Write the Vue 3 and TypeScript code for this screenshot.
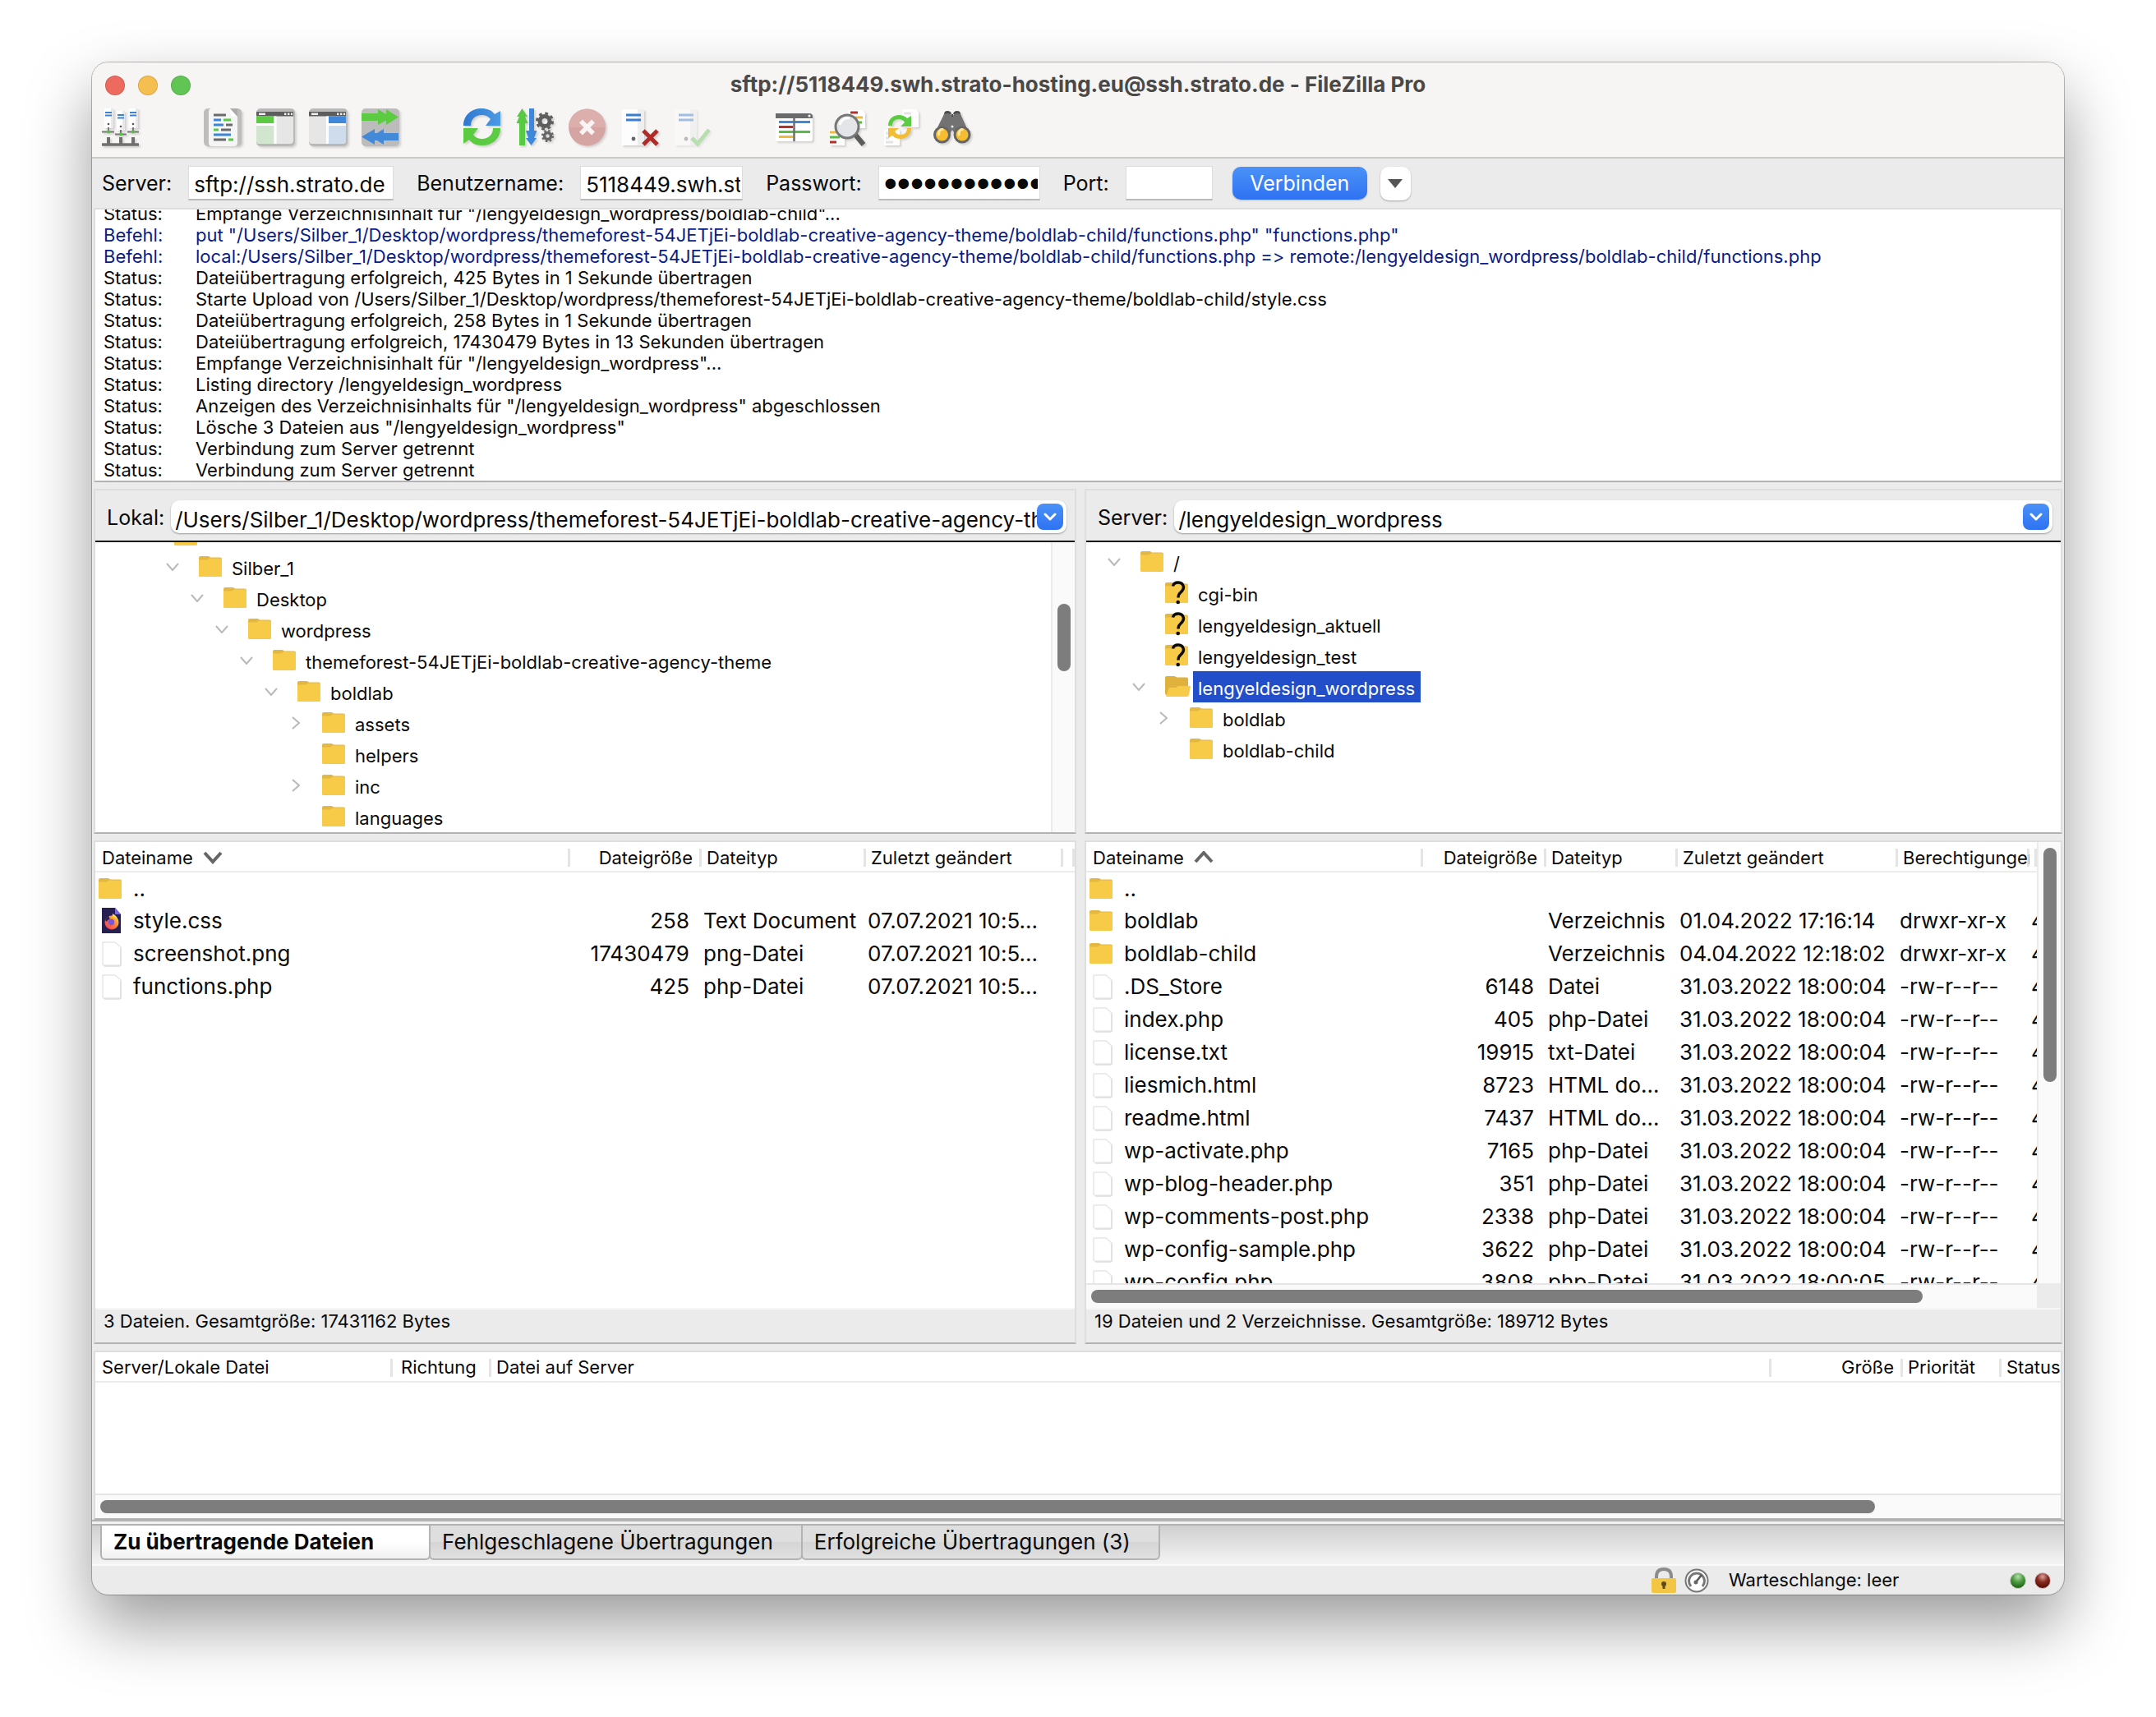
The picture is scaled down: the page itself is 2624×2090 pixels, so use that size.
<script setup lang="ts">
import { ref } from 'vue'

interface LogLine { kind: 'Status' | 'Befehl'; text: string }
interface TreeNode { depth: number; name: string; icon: string; open?: boolean; closed?: boolean; selected?: boolean }
interface FileRow { icon: string; name: string; size: string; type: string; date: string; perms?: string; owner?: string }

const server = ref('sftp://ssh.strato.de')
const user = ref('5118449.swh.strato-hosting.eu')
const password = ref('passwort12345678')
const port = ref('')
const localPath = ref('/Users/Silber_1/Desktop/wordpress/themeforest-54JETjEi-boldlab-creative-agency-theme/')
const remotePath = ref('/lengyeldesign_wordpress')

const toolGroups: { id: string; label: string; faded?: boolean }[][] = [
  [{ id: 'sites', label: 'Servermanager' }],
  [
    { id: 'log', label: 'Nachrichtenprotokoll' },
    { id: 'localtree', label: 'Lokaler Verzeichnisbaum' },
    { id: 'remotetree', label: 'Server-Verzeichnisbaum' },
    { id: 'queue', label: 'Warteschlange' },
  ],
  [
    { id: 'refresh', label: 'Aktualisieren' },
    { id: 'process', label: 'Warteschlange verarbeiten' },
    { id: 'cancel', label: 'Abbrechen' },
    { id: 'disconnect', label: 'Trennen' },
    { id: 'reconnect', label: 'Wiederverbinden', faded: true },
  ],
  [
    { id: 'filter', label: 'Filter' },
    { id: 'compare', label: 'Verzeichnisvergleich' },
    { id: 'sync', label: 'Synchronisierter Verzeichniswechsel' },
    { id: 'find', label: 'Dateien suchen' },
  ],
]

const theme = '/Users/Silber_1/Desktop/wordpress/themeforest-54JETjEi-boldlab-creative-agency-theme/boldlab-child'
const log: LogLine[] = [
  { kind: 'Status', text: 'Empfange Verzeichnisinhalt für "/lengyeldesign_wordpress/boldlab-child"...' },
  { kind: 'Befehl', text: `put "${theme}/functions.php" "functions.php"` },
  { kind: 'Befehl', text: `local:${theme}/functions.php => remote:/lengyeldesign_wordpress/boldlab-child/functions.php` },
  { kind: 'Status', text: 'Dateiübertragung erfolgreich, 425 Bytes in 1 Sekunde übertragen' },
  { kind: 'Status', text: `Starte Upload von ${theme}/style.css` },
  { kind: 'Status', text: 'Dateiübertragung erfolgreich, 258 Bytes in 1 Sekunde übertragen' },
  { kind: 'Status', text: 'Dateiübertragung erfolgreich, 17430479 Bytes in 13 Sekunden übertragen' },
  { kind: 'Status', text: 'Empfange Verzeichnisinhalt für "/lengyeldesign_wordpress"...' },
  { kind: 'Status', text: 'Listing directory /lengyeldesign_wordpress' },
  { kind: 'Status', text: 'Anzeigen des Verzeichnisinhalts für "/lengyeldesign_wordpress" abgeschlossen' },
  { kind: 'Status', text: 'Lösche 3 Dateien aus "/lengyeldesign_wordpress"' },
  { kind: 'Status', text: 'Verbindung zum Server getrennt' },
  { kind: 'Status', text: 'Verbindung zum Server getrennt' },
]

const localTree: TreeNode[] = [
  { depth: 2, name: '', icon: 'folder', open: true },
  { depth: 3, name: 'Silber_1', icon: 'folder', open: true },
  { depth: 4, name: 'Desktop', icon: 'folder', open: true },
  { depth: 5, name: 'wordpress', icon: 'folder', open: true },
  { depth: 6, name: 'themeforest-54JETjEi-boldlab-creative-agency-theme', icon: 'folder', open: true },
  { depth: 7, name: 'boldlab', icon: 'folder', open: true },
  { depth: 8, name: 'assets', icon: 'folder', closed: true },
  { depth: 8, name: 'helpers', icon: 'folder' },
  { depth: 8, name: 'inc', icon: 'folder', closed: true },
  { depth: 8, name: 'languages', icon: 'folder' },
]
const remoteTree: TreeNode[] = [
  { depth: 1, name: '/', icon: 'folder', open: true },
  { depth: 2, name: 'cgi-bin', icon: 'unknown' },
  { depth: 2, name: 'lengyeldesign_aktuell', icon: 'unknown' },
  { depth: 2, name: 'lengyeldesign_test', icon: 'unknown' },
  { depth: 2, name: 'lengyeldesign_wordpress', icon: 'folderopen', open: true, selected: true },
  { depth: 3, name: 'boldlab', icon: 'folder', closed: true },
  { depth: 3, name: 'boldlab-child', icon: 'folder' },
]

const localFiles: FileRow[] = [
  { icon: 'folder', name: '..', size: '', type: '', date: '' },
  { icon: 'firefox', name: 'style.css', size: '258', type: 'Text Document', date: '07.07.2021 10:5...' },
  { icon: 'file', name: 'screenshot.png', size: '17430479', type: 'png-Datei', date: '07.07.2021 10:5...' },
  { icon: 'file', name: 'functions.php', size: '425', type: 'php-Datei', date: '07.07.2021 10:5...' },
]

const remoteFile = (name: string, size: string, type = 'php-Datei', date = '31.03.2022 18:00:04'): FileRow =>
  ({ icon: 'file', name, size, type, date, perms: '-rw-r--r--', owner: '4' })
const remoteFiles: FileRow[] = [
  { icon: 'folder', name: '..', size: '', type: '', date: '' },
  { icon: 'folder', name: 'boldlab', size: '', type: 'Verzeichnis', date: '01.04.2022 17:16:14', perms: 'drwxr-xr-x', owner: '4' },
  { icon: 'folder', name: 'boldlab-child', size: '', type: 'Verzeichnis', date: '04.04.2022 12:18:02', perms: 'drwxr-xr-x', owner: '4' },
  remoteFile('.DS_Store', '6148', 'Datei'),
  remoteFile('index.php', '405'),
  remoteFile('license.txt', '19915', 'txt-Datei'),
  remoteFile('liesmich.html', '8723', 'HTML do...'),
  remoteFile('readme.html', '7437', 'HTML do...'),
  remoteFile('wp-activate.php', '7165'),
  remoteFile('wp-blog-header.php', '351'),
  remoteFile('wp-comments-post.php', '2338'),
  remoteFile('wp-config-sample.php', '3622'),
  remoteFile('wp-config.php', '3808', 'php-Datei', '31.03.2022 18:00:05'),
]

const tabs = ['Zu übertragende Dateien', 'Fehlgeschlagene Übertragungen', 'Erfolgreiche Übertragungen (3)']
const activeTab = ref(0)
</script>

<template>
  <div class="desktop">
    <svg class="sprites" width="0" height="0" aria-hidden="true">
      <defs>
        <linearGradient id="gFox" x1="1" y1="0" x2="0" y2="1">
          <stop offset="0" stop-color="#ffd83b" /><stop offset=".5" stop-color="#ff7a35" /><stop offset="1" stop-color="#e8316f" />
        </linearGradient>
        <linearGradient id="gBlue" x1="0" y1="0" x2="1" y2="0">
          <stop offset="0" stop-color="#2f78cf" /><stop offset="1" stop-color="#4a9ae6" />
        </linearGradient>
        <radialGradient id="gGreenLed" cx=".5" cy=".25" r=".8">
          <stop offset="0" stop-color="#b5dfb0" /><stop offset=".45" stop-color="#4c9a3f" /><stop offset="1" stop-color="#165409" />
        </radialGradient>
        <radialGradient id="gRedLed" cx=".5" cy=".25" r=".8">
          <stop offset="0" stop-color="#d9a29c" /><stop offset=".45" stop-color="#87281f" /><stop offset="1" stop-color="#4c0600" />
        </radialGradient>
      </defs>

      <symbol id="folder" viewBox="0 0 32 32">
        <path d="M0 5q0-2 2-2h9q2 0 3 1.500h12q2 0 2 2V26q0 2-2 2H2q-2 0-2-2z" fill="#e2b742" />
        <path d="M0 7.500h10l3-2h13q2 0 2 2V26q0 2-2 2H2q-2 0-2-2z" fill="#f7cb47" />
      </symbol>
      <symbol id="folderopen" viewBox="0 0 32 32">
        <path d="M0 5q0-2 2-2h9q2 0 3 1.500h12q2 0 2 2V26H2q-2 0-2-2z" fill="#dfb13d" />
        <path d="M1 28L4 19q.5-2 2.500-2H13l3-2h15l-2 11q-.5 2-2.500 2z" fill="#f7cb47" />
      </symbol>
      <symbol id="unknown" viewBox="0 0 32 32">
        <path d="M0 5q0-2 2-2h9q2 0 3 1.500h12q2 0 2 2V26q0 2-2 2H2q-2 0-2-2z" fill="#e2b742" />
        <path d="M0 7.500h10l3-2h13q2 0 2 2V26q0 2-2 2H2q-2 0-2-2z" fill="#f7cb47" />
        <path d="M9.500 7.500Q10.500 3 16 3t6.500 5.500q0 3.500-3.500 6.500-3 2.500-3 6.500" fill="none" stroke="#0c0a04" stroke-width="3.400" />
        <circle cx="15.700" cy="27" r="2.300" fill="#0c0a04" />
      </symbol>
      <symbol id="file" viewBox="0 0 32 32">
        <path d="M5 2h15l7 6v20q0 2-2 2H7q-2 0-2-2z" fill="#fff" stroke="#e6e6e6" stroke-width="1.500" />
        <path d="M27 9v20q0 2-2 2H7" fill="none" stroke="#dedede" stroke-width="1.500" />
      </symbol>
      <symbol id="firefox" viewBox="0 0 32 32">
        <path d="M4 0h16l7 8v23H4z" fill="#261f52" />
        <path d="M20 0l7 8h-7z" fill="#7a68e0" />
        <circle cx="16" cy="18" r="8.500" fill="url(#gFox)" />
        <circle cx="15.500" cy="17.500" r="3.700" fill="#7d55d8" />
        <path d="M17 7q6 3 7 9-2-4-6-4-2-2-1-5z" fill="#ffd83b" />
        <path d="M8 15q2-4 5-5-1 2 1 4-3 0-4 3z" fill="#261f52" />
      </symbol>

      <symbol id="sites" viewBox="0 0 48 48">
        <g fill="#fff"><path d="M3 0h11v24H3zM18 3h10v24H18zM33 0h11v24H33z" /></g>
        <g fill="#e8e8ea"><path d="M11 0h3v24h-3zM25 3h3v24h-3zM41 0h3v24h-3z" /></g>
        <g stroke="#3c82d2" stroke-width="2"><path d="M4 5h8M4 8.500h8M19 8h8M19 11.500h8M34 5h8M34 8.500h8" /></g>
        <g fill="#555"><circle cx="8" cy="19" r="1.300" /><circle cx="23" cy="22" r="1.300" /><circle cx="38" cy="19" r="1.300" /></g>
        <path d="M0 28.500h15M16 31.500h14M31 28.500h14M8 23v6M23 26v5M38 23v6" stroke="#777" stroke-width="2" />
        <path d="M8 35v8M23 35v8M38 35v8" stroke="#707070" stroke-width="4" />
        <path d="M0 44h45" stroke="#707070" stroke-width="3.500" />
        <g fill="#4fc33d"><circle cx="8" cy="28.500" r="2" /><circle cx="23" cy="31.500" r="2" /><circle cx="38" cy="28.500" r="2" /></g>
      </symbol>
      <symbol id="log" viewBox="0 0 48 48">
        <rect width="46" height="46" rx="5" fill="#bdbdbd" />
        <path d="M6 4q0-4 4-4h22l9 10v32q0 4-4 4H10q-4 0-4-4z" fill="#f5f5f5" />
        <path d="M32 0l9 10h-5q-4-1-4-6z" fill="#fff" />
        <path d="M32 0h9v10z" fill="#acacac" />
        <g fill="none" stroke-width="2.800">
          <path d="M12 8h15M27 20h8M21 26h12M12 38h15" stroke="#6b6b6b" />
          <path d="M12 14h9M12 20h12M12 32h21" stroke="#3c86d6" />
          <path d="M24 14h9M12 26h6M30 38h6" stroke="#58c945" />
        </g>
      </symbol>
      <symbol id="localtree" viewBox="0 0 48 48">
        <rect width="47" height="46" rx="5" fill="#b9b9b9" />
        <path d="M0 9h45v30q0 4-4 4H4q-4 0-4-4z" fill="#e6e6e6" />
        <path d="M0 4h45v5.500H0z" fill="#5d5d5d" />
        <path d="M3 6.800h8M34 6.800h2.400M38 6.800h2.400M42 6.800h2" stroke="#eee" stroke-width="2.400" />
        <path d="M0 9.500h21.500V18H0z" fill="#5ccb43" />
        <path d="M0 18h21.500v25H4q-4 0-4-4z" fill="#d2e6cf" />
        <path d="M23 9.500V43M0 19.500h23" stroke="#fff" stroke-width="3" />
      </symbol>
      <symbol id="remotetree" viewBox="0 0 48 48">
        <rect width="47" height="46" rx="5" fill="#b9b9b9" />
        <path d="M0 9h45v30q0 4-4 4H4q-4 0-4-4z" fill="#e6e6e6" />
        <path d="M0 4h45v5.500H0z" fill="#5d5d5d" />
        <path d="M3 6.800h8M34 6.800h2.400M38 6.800h2.400M42 6.800h2" stroke="#eee" stroke-width="2.400" />
        <path d="M24 9.500h21V18H24z" fill="#3f88dc" />
        <path d="M24 18h21v21q0 4-4 4H24z" fill="#cfdcec" />
        <path d="M22.500 9.500V43M22 19.500h23" stroke="#fff" stroke-width="3" />
      </symbol>
      <symbol id="queue" viewBox="0 0 48 48">
        <rect width="46" height="46" rx="5" fill="#bcbcbc" />
        <path d="M0 6h20V1l9 5.500h1V1l15 9.500L30 20v-5h-1l-9 5v-5H0z" fill="#5dcb41" />
        <path d="M45 30H27v-5l-8 5h-3v-5L0 34.500 16 44v-5h3l8 5v-5h18z" fill="#4289d8" />
      </symbol>
      <symbol id="refresh" viewBox="0 0 48 48">
        <path d="M0 21C0 8 10 0 22 0c7 0 12 2 16 7l7-4v18H27l6-8c-3-4-7-5-11-5C15 8 9 13 9 21z" fill="url(#gBlue)" />
        <path d="M45 24c0 13-10 21-22 21-7 0-12-2-16-7l-7 5V24h18l-6 8c3 4 7 5 11 5 7 0 13-5 13-13z" fill="#5bcb42" />
      </symbol>
      <symbol id="process" viewBox="0 0 48 48">
        <path d="M7.500 0L14 10h-3l3.500 8H11v27H4V18H.5L4 10H1z" fill="#58c943" />
        <path d="M16 0h6v27h3.500L22 36h3l-6.500 9L12 36h3l-3-9h4z" fill="#3f87d9" />
        <circle cx="35" cy="15.500" r="6" fill="none" stroke="#5e5e5e" stroke-width="5" />
        <circle cx="35" cy="15.500" r="9.500" fill="none" stroke="#5e5e5e" stroke-width="3" stroke-dasharray="3.700 3.760" />
        <circle cx="38.500" cy="33.500" r="4" fill="none" stroke="#666" stroke-width="3.500" />
        <circle cx="38.500" cy="33.500" r="6.500" fill="none" stroke="#666" stroke-width="2.200" stroke-dasharray="2.500 2.600" />
      </symbol>
      <symbol id="cancel" viewBox="0 0 48 48">
        <circle cx="22.500" cy="23" r="22.500" fill="#d5a5a3" />
        <path d="M0 23a22.500 22.500 0 0 1 45 0z" fill="#dcaeac" />
        <path d="M15 15.500l15 15M30 15.500l-15 15" stroke="#f8f4f3" stroke-width="5.500" />
      </symbol>
      <symbol id="disconnect" viewBox="0 0 48 48">
        <path d="M1 1h27v44H1z" fill="#fdfdfd" /><path d="M20 1h8v44h-8z" fill="#eeeeef" />
        <path d="M6 8h18M6 14h18" stroke="#3b7dcf" stroke-width="2.800" />
        <circle cx="15" cy="37" r="2.400" fill="#666" />
        <path d="M27 27l17 17M44 27L27 44" stroke="#b12a26" stroke-width="5" />
      </symbol>
      <symbol id="reconnect" viewBox="0 0 48 48">
        <path d="M1 1h27v44H1z" fill="#fdfdfd" /><path d="M20 1h8v44h-8z" fill="#ececee" />
        <path d="M6 8h18M6 14h18" stroke="#3b7dcf" stroke-width="2.800" />
        <circle cx="15" cy="37" r="2.400" fill="#777" />
        <path d="M22 36l7 7 14-17" fill="none" stroke="#6cc45c" stroke-width="5" />
      </symbol>
      <symbol id="filter" viewBox="0 0 48 48">
        <path d="M0 12h45v25q0 3-3 3H0z" fill="#fff" />
        <path d="M0 6h41q4 0 4 4v2H0z" fill="#6a6a6a" /><circle cx="41" cy="9" r="1.500" fill="#fff" />
        <g stroke-width="3"><path d="M4 16.500h38" stroke="#4088d6" /><path d="M4 22.500h17" stroke="#b5302c" /><path d="M4 28.500h38" stroke="#55bd43" /><path d="M4 34.500h17" stroke="#edbb3a" /></g>
        <path d="M22.500 12v28" stroke="#6f6f6f" stroke-width="2.500" />
      </symbol>
      <symbol id="compare" viewBox="0 0 48 48">
        <path d="M24 2h18l3 4v18H28zM2 26h18v19H2z" fill="#fff" />
        <path d="M27 5h9M2 41h8" stroke="#b5302c" stroke-width="3" /><path d="M33 11h9M2 29h8" stroke="#f0bc38" stroke-width="3" /><path d="M36 17h5M2 35h12" stroke="#55bd43" stroke-width="3" />
        <path d="M33 32l10 12" stroke="#5b5b5b" stroke-width="6" />
        <circle cx="23" cy="22" r="14" fill="#e3e5e9" stroke="#777" stroke-width="3" />
        <path d="M14 20a10 10 0 0 1 12-8" fill="none" stroke="#fff" stroke-width="3" />
      </symbol>
      <symbol id="sync" viewBox="0 0 48 48">
        <path d="M26 1h17l3 4v18H28zM4 26h19v19H4z" fill="#fff" />
        <path d="M28 6h9M6 30h8M6 36h4M6 41h9" stroke="#e4e4e4" stroke-width="3" />
        <path d="M9 21C9 13 15 8 22 8c4 0 7 1 10 4l5-3v13H24l5-5c-2-3-4-4-7-4-5 0-8 3-8 8z" fill="#5bcb42" />
        <path d="M37 24c0 8-6 13-13 13-4 0-7-1-10-4l-5 3V24h13l-5 4c2 3 4 4 7 4 5 0 8-3 8-8z" fill="#f1bc36" />
      </symbol>
      <symbol id="find" viewBox="0 0 48 48">
        <path d="M13 7q0-4 4-4 5 0 5 5v3h2V8q0-5 5-5 4 0 4 4z" fill="#4b4b4b" />
        <path d="M12 9q0-3 5-3 5 0 5 4h2q0-4 5-4t5 3l9 20-14 6-6-9-6 9L0 33z" fill="#727272" />
        <circle cx="10.500" cy="32" r="10.500" fill="#666" /><circle cx="35" cy="32" r="10.500" fill="#666" />
        <circle cx="10.500" cy="32" r="7.500" fill="#f6bd30" /><circle cx="35" cy="32" r="7.500" fill="#f6bd30" />
        <path d="M7 33a4 5 0 0 1 5-7M31.500 33a4 5 0 0 1 5-7" fill="none" stroke="#ffe7a0" stroke-width="3" />
        <circle cx="23" cy="22" r="1.500" fill="#eee" />
      </symbol>
    </svg>

    <main class="window">
      <header class="titlebar">
        <div class="title-row">
          <div class="lights">
            <button class="light red" aria-label="Schließen"></button>
            <button class="light yellow" aria-label="Minimieren"></button>
            <button class="light green" aria-label="Vergrößern"></button>
          </div>
          <h1>sftp://5118449.swh.strato-hosting.eu@ssh.strato.de - FileZilla Pro</h1>
        </div>
        <nav class="toolbar">
          <div v-for="(group, g) in toolGroups" :key="g" class="tool-group">
            <button v-for="tool in group" :key="tool.id" class="tool" :class="{ faded: tool.faded }" :aria-label="tool.label">
              <svg><use :href="'#' + tool.id" /></svg>
            </button>
          </div>
        </nav>
      </header>

      <form class="quick" @submit.prevent>
        <label for="q-server">Server:</label>
        <input id="q-server" v-model="server" class="field w-server" type="text" />
        <label for="q-user">Benutzername:</label>
        <input id="q-user" v-model="user" class="field w-user" type="text" />
        <label for="q-pass">Passwort:</label>
        <input id="q-pass" v-model="password" class="field w-pass" type="password" autocomplete="off" />
        <label for="q-port">Port:</label>
        <input id="q-port" v-model="port" class="field w-port" type="text" />
        <button class="connect" type="submit">Verbinden</button>
        <button class="history" type="button" aria-label="Verlauf">
          <svg width="18" height="11" viewBox="0 0 18 11"><path d="M0 0h18L9 11z" fill="#555" /></svg>
        </button>
      </form>

      <section class="pane log">
        <p v-for="(line, i) in log" :key="i" :class="{ command: line.kind === 'Befehl' }">
          <span>{{ line.kind }}:</span><span>{{ line.text }}</span>
        </p>
      </section>

      <div class="split">
        <section class="pane">
          <div class="pathbar">
            <label for="p-local">Lokal:</label>
            <div class="combo">
              <input id="p-local" v-model="localPath" type="text" />
              <button aria-label="Lokale Pfade"><svg width="16" height="10" viewBox="0 0 16 10"><path d="M2 2l6 6 6-6" fill="none" stroke="#fff" stroke-width="3" stroke-linecap="round" stroke-linejoin="round" /></svg></button>
            </div>
          </div>
          <div class="tree-area">
            <ul class="tree local-tree">
              <li v-for="(node, i) in localTree" :key="i" :style="{ paddingLeft: node.depth * 30 - 8 + 'px' }">
                <span class="twist">
                  <svg v-if="node.open" width="16" height="10" viewBox="0 0 16 10"><path d="M1 1l7 8 7-8" /></svg>
                  <svg v-else-if="node.closed" width="10" height="16" viewBox="0 0 10 16"><path d="M1 1l8 7-8 7" /></svg>
                </span>
                <svg class="node-icon"><use :href="'#' + node.icon" /></svg>
                <span class="node-name">{{ node.name }}</span>
              </li>
            </ul>
            <div class="vtrack"><div class="thumb local-thumb"></div></div>
          </div>
        </section>
        <section class="pane">
          <div class="pathbar">
            <label for="p-remote">Server:</label>
            <div class="combo">
              <input id="p-remote" v-model="remotePath" type="text" />
              <button aria-label="Serverpfade"><svg width="16" height="10" viewBox="0 0 16 10"><path d="M2 2l6 6 6-6" fill="none" stroke="#fff" stroke-width="3" stroke-linecap="round" stroke-linejoin="round" /></svg></button>
            </div>
          </div>
          <div class="tree-area">
            <ul class="tree remote-tree">
              <li v-for="(node, i) in remoteTree" :key="i" :style="{ paddingLeft: node.depth * 30 - 8 + 'px' }">
                <span class="twist">
                  <svg v-if="node.open" width="16" height="10" viewBox="0 0 16 10"><path d="M1 1l7 8 7-8" /></svg>
                  <svg v-else-if="node.closed" width="10" height="16" viewBox="0 0 10 16"><path d="M1 1l8 7-8 7" /></svg>
                </span>
                <svg class="node-icon"><use :href="'#' + node.icon" /></svg>
                <span class="node-name" :class="{ selected: node.selected }">{{ node.name }}</span>
              </li>
            </ul>
          </div>
        </section>
      </div>

      <div class="split">
        <section class="pane">
          <div class="list-area">
            <table class="files">
              <colgroup><col /><col class="c160" /><col class="c200" /><col class="c240" /><col class="c14" /></colgroup>
              <thead>
                <tr>
                  <th>Dateiname <svg class="sort" width="24" height="16" viewBox="0 0 24 16"><path d="M2 2l10 11L22 2" /></svg></th>
                  <th class="num">Dateigröße</th><th>Dateityp</th><th>Zuletzt geändert</th><th></th>
                </tr>
              </thead>
              <tbody>
                <tr v-for="file in localFiles" :key="file.name">
                  <td><div class="name"><svg><use :href="'#' + file.icon" /></svg>{{ file.name }}</div></td>
                  <td class="num">{{ file.size }}</td><td>{{ file.type }}</td><td>{{ file.date }}</td><td></td>
                </tr>
              </tbody>
            </table>
          </div>
          <footer class="summary">3 Dateien. Gesamtgröße: 17431162 Bytes</footer>
        </section>
        <section class="pane">
          <div class="list-area">
            <div class="scroll-row">
              <div class="clip">
                <table class="files">
                  <colgroup><col /><col class="c150" /><col class="c160" /><col class="c268" /><col class="c160" /><col class="c9" /></colgroup>
                  <thead>
                    <tr>
                      <th>Dateiname <svg class="sort" width="24" height="16" viewBox="0 0 24 16"><path d="M2 13L12 2l10 11" /></svg></th>
                      <th class="num">Dateigröße</th><th>Dateityp</th><th>Zuletzt geändert</th><th>Berechtigungen</th><th></th>
                    </tr>
                  </thead>
                  <tbody>
                    <tr v-for="file in remoteFiles" :key="file.name">
                      <td><div class="name"><svg><use :href="'#' + file.icon" /></svg>{{ file.name }}</div></td>
                      <td class="num">{{ file.size }}</td><td>{{ file.type }}</td><td>{{ file.date }}</td>
                      <td>{{ file.perms }}</td><td>{{ file.owner }}</td>
                    </tr>
                  </tbody>
                </table>
              </div>
              <div class="vtrack"><div class="thumb remote-thumb"></div></div>
            </div>
            <div class="hrow"><div class="htrack"><div class="hthumb remote-hthumb"></div></div></div>
          </div>
          <footer class="summary">19 Dateien und 2 Verzeichnisse. Gesamtgröße: 189712 Bytes</footer>
        </section>
      </div>

      <section class="pane queue-pane">
        <div class="queue-list">
          <table class="files">
            <colgroup><col class="c362" /><col class="c120" /><col /><col class="c160" /><col class="c120" /><col class="c72" /></colgroup>
            <thead>
              <tr><th>Server/Lokale Datei</th><th class="direction">Richtung</th><th>Datei auf Server</th><th class="num">Größe</th><th>Priorität</th><th class="last">Status</th></tr>
            </thead>
          </table>
        </div>
        <div class="htrack"><div class="hthumb queue-hthumb"></div></div>
      </section>

      <div class="tabbar" role="tablist">
        <button
          v-for="(tab, i) in tabs" :key="tab" role="tab" class="tab" :class="{ active: i === activeTab }"
          :aria-selected="i === activeTab" @click="activeTab = i"
        >{{ tab }}</button>
      </div>

      <footer class="statusbar">
        <svg width="32" height="32" viewBox="0 0 32 32">
          <path d="M7 15v-4q0-9 9-9t9 9v4" fill="none" stroke="#8c8c8c" stroke-width="4" />
          <rect x="1" y="13" width="30" height="18" rx="2" fill="#f2c544" />
          <circle cx="16" cy="20" r="3" fill="#5a4a1c" /><path d="M14.500 20h3v6h-3z" fill="#5a4a1c" />
        </svg>
        <svg width="32" height="32" viewBox="0 0 32 32">
          <circle cx="16" cy="16" r="13.500" fill="#fff" stroke="#777" stroke-width="2" />
          <path d="M9 23a9.500 9.500 0 1 1 14 0" fill="none" stroke="#777" stroke-width="3" />
          <path d="M14 19l8-10" stroke="#555" stroke-width="2.500" /><circle cx="15" cy="18" r="2.500" fill="#666" />
        </svg>
        <span class="queue-state">Warteschlange: leer</span>
        <svg width="22" height="22" viewBox="0 0 22 22"><circle cx="11" cy="11" r="9.500" fill="url(#gGreenLed)" stroke="#c9d3c7" /></svg>
        <svg width="22" height="22" viewBox="0 0 22 22"><circle cx="11" cy="11" r="9.500" fill="url(#gRedLed)" stroke="#d6c8c7" /></svg>
      </footer>
    </main>
  </div>
</template>

<style>
body {
  margin: 0;
  background: #fff;
}
</style>

<style scoped>
.desktop {
  padding: 76px 112px 148px;
  font-family: Inter, 'Liberation Sans', sans-serif;
  font-size: 22px;
  font-feature-settings: 'calt' 0;
  line-height: 26px;
  color: #0a0a0a;
}
.desktop * {
  box-sizing: border-box;
}
.sprites {
  position: absolute;
}
button,
input {
  font: inherit;
  color: inherit;
  border: 0;
  padding: 0;
  margin: 0;
  background: none;
  outline: 0;
}
svg {
  display: block;
  flex: none;
}
.window {
  background: #ebebeb;
  border-radius: 20px;
  overflow: hidden;
  box-shadow: 0 0 0 1px rgba(0, 0, 0, 0.25), 0 36px 80px rgba(0, 0, 0, 0.4);
}

/* title bar and toolbar */
.titlebar {
  background: #f6f5f3;
  border-bottom: 2px solid #c9c9c5;
  padding: 0 12px 11px;
}
.title-row {
  display: grid;
  grid-template-columns: 1fr auto 1fr;
  align-items: center;
  height: 56px;
}
.lights {
  display: flex;
  gap: 16px;
  padding-left: 4px;
}
.light {
  width: 24px;
  height: 24px;
  border-radius: 50%;
  border: 1px solid rgba(0, 0, 0, 0.12);
}
.red { background: #ec6a5e; }
.yellow { background: #f4bf4f; }
.green { background: #61c554; }
h1 {
  margin: 0;
  padding-bottom: 2px;
  font-size: 26px;
  font-weight: 700;
  color: #4a4947;
}
.toolbar {
  display: flex;
  gap: 76px;
}
.tool-group {
  display: flex;
  gap: 16px;
}
.tool svg {
  width: 48px;
  height: 48px;
  filter: drop-shadow(2px 2px 1px rgba(0, 0, 0, 0.14));
}
.faded {
  opacity: 0.45;
}

/* quick connect */
.quick {
  display: flex;
  align-items: center;
  height: 60px;
  padding: 0 12px;
  font-size: 25px;
}
.field {
  height: 42px;
  padding: 4px 2px 0 6px;
  font-size: 26px;
  background: #fff;
  border: 1px solid #dcdcdc;
  border-bottom: 2px solid #b9b9b9;
  margin: 0 28px 0 20px;
}
.w-server { width: 250px; }
.w-user { width: 198px; }
.w-pass {
  width: 197px;
  padding-top: 0;
  font-family: 'Liberation Sans', sans-serif;
  font-size: 46px;
}
.w-port { width: 106px; margin-right: 24px; }
.connect {
  width: 164px;
  height: 40px;
  border-radius: 10px;
  color: #fff;
  background: linear-gradient(#4a92f7, #2f72f3);
  box-shadow: 0 1px 2px rgba(0, 0, 0, 0.2);
}
.history {
  display: flex;
  align-items: center;
  justify-content: center;
  width: 37px;
  height: 41px;
  margin-left: 16px;
  border-radius: 10px;
  background: #fff;
  box-shadow: 0 1px 2px rgba(0, 0, 0, 0.3);
}

/* bordered panes */
.pane {
  min-width: 0;
  border: 2px solid #dedede;
  border-bottom-color: #b3b3b3;
}
.log {
  display: flex;
  flex-direction: column;
  justify-content: flex-end;
  height: 334px;
  margin: 0 2px 8px;
  background: #fff;
  overflow: hidden;
}
.log p {
  display: grid;
  grid-template-columns: 112px 1fr;
  flex: none;
  margin: 0;
  padding-left: 10px;
  white-space: nowrap;
}
.log .command {
  color: #0a1c86;
}
.split {
  display: grid;
  grid-template-columns: minmax(0, 1196fr) minmax(0, 1190fr);
  gap: 10px;
  margin: 0 2px 8px;
}
.pathbar {
  display: flex;
  align-items: center;
  gap: 8px;
  height: 61px;
  padding: 3px 10px 0 14px;
  font-size: 25px;
}
.pathbar label {
  padding-top: 2px;
}
.combo {
  display: flex;
  align-items: center;
  flex: 1;
  height: 40px;
  padding-right: 4px;
  border-radius: 10px;
  background: #fff;
  box-shadow: 0 1px 2px rgba(0, 0, 0, 0.35);
}
.combo input {
  flex: 1;
  min-width: 0;
  padding: 6px 0 0 5px;
  font-size: 26px;
}
.combo button {
  display: flex;
  align-items: center;
  justify-content: center;
  width: 32px;
  height: 32px;
  border-radius: 8px;
  background: linear-gradient(#4a92f7, #2f72f3);
}

/* directory trees */
.tree-area {
  display: flex;
  height: 355px;
  background: #fff;
  border-top: 2px solid #0c0c0c;
  overflow: hidden;
}
.tree {
  display: flex;
  flex-direction: column;
  flex: 1;
  margin: 0;
  padding: 0;
  list-style: none;
}
.tree li {
  display: flex;
  align-items: center;
  flex: none;
  height: 38px;
}
.local-tree {
  justify-content: flex-end;
}
.remote-tree {
  padding-top: 5px;
}
.twist {
  display: flex;
  justify-content: center;
  width: 24px;
  margin-right: 20px;
}
.twist path {
  fill: none;
  stroke: #b9b9b9;
  stroke-width: 2;
}
.node-icon {
  width: 32px;
  height: 32px;
}
.node-name {
  margin-left: 2px;
  padding: 8px 7px 4px 6px;
}
.selected {
  color: #fff;
  background: #234ec9;
}

/* scroll bars */
.vtrack {
  flex: none;
  width: 29px;
  background: #fafafa;
  border-left: 2px solid #ebebeb;
}
.thumb {
  width: 16px;
  margin: 0 auto;
  border-radius: 8px;
  background: #7d7d7d;
}
.local-thumb {
  height: 82px;
  margin-top: 75px;
}
.remote-thumb {
  height: 285px;
  margin-top: 7px;
}
.hrow {
  padding-right: 29px;
  background: #ebebeb;
}
.htrack {
  height: 30px;
  padding: 6px 6px 0;
  background: #fafafa;
  border-top: 2px solid #e6e6e6;
}
.hthumb {
  height: 16px;
  border-radius: 8px;
  background: #7d7d7d;
}
.remote-hthumb { margin-right: 133px; }
.queue-hthumb { margin-right: 220px; }

/* file lists */
.list-area {
  height: 567px;
  background: #fff;
}
.scroll-row {
  display: flex;
  height: 537px;
}
.clip {
  flex: 1;
  min-width: 0;
  overflow: hidden;
}
.files {
  width: 100%;
  table-layout: fixed;
  border-collapse: collapse;
}
.c9 { width: 9px; }
.c14 { width: 14px; }
.c72 { width: 72px; }
.c120 { width: 120px; }
.c150 { width: 150px; }
.c160 { width: 160px; }
.c200 { width: 200px; }
.c240 { width: 240px; }
.c268 { width: 268px; }
.c362 { width: 362px; }
th {
  height: 36px;
  padding: 2px 4px 0 6px;
  font-weight: 400;
  text-align: left;
  white-space: nowrap;
  overflow: hidden;
  border-bottom: 2px solid #ececec;
  background: linear-gradient(#e4e4e4, #e4e4e4) right 8px / 3px 22px no-repeat;
}
th:first-child {
  padding-left: 8px;
}
th.direction {
  padding-left: 10px;
}
th.last {
  padding-right: 0;
  background: none;
}
th.num {
  padding-right: 11px;
}
.sort {
  display: inline-block;
  margin-left: 6px;
}
.sort path {
  fill: none;
  stroke: #666;
  stroke-width: 4;
}
td {
  height: 40px;
  padding: 0 0 0 2px;
  font-size: 26px;
  white-space: nowrap;
  overflow: hidden;
}
td:first-child {
  padding-left: 4px;
}
.num {
  text-align: right;
}
td.num {
  padding-right: 15px;
}
.name {
  display: flex;
  align-items: center;
  gap: 10px;
}
.name svg {
  width: 32px;
  height: 32px;
}
.summary {
  height: 42px;
  padding: 1px 10px 0;
  border-top: 2px solid #f6f6f6;
}

/* transfer queue */
.queue-pane {
  margin: 0 2px;
  background: #fff;
}
.queue-pane th {
  padding-top: 0;
}
.queue-list {
  height: 172px;
}
.tabbar {
  display: flex;
  height: 56px;
  padding-left: 10px;
  align-items: flex-start;
  background: linear-gradient(#cfcfcf, #f4f4f4);
  border-top: 7px double #b3b3b3;
  border-bottom: 2px solid #fafafa;
}
.tab {
  height: 42px;
  padding: 0 34px 0 14px;
  font-size: 26px;
  border: 2px solid #b3b3b3;
  border-top: 0;
  margin-right: -2px;
  border-radius: 0 0 6px 6px;
  background: linear-gradient(#dedede 50%, #d5d5d5 50%, #e0e0e0);
}
.tab.active {
  padding-right: 67px;
  font-weight: 700;
  background: linear-gradient(#fff 50%, #f0f0f0);
}
.statusbar {
  display: flex;
  align-items: center;
  height: 35px;
  gap: 8px;
  padding: 0 15px 0 0;
  justify-content: flex-end;
}
.queue-state {
  width: 348px;
  padding: 0 0 2px 15px;
}
</style>
